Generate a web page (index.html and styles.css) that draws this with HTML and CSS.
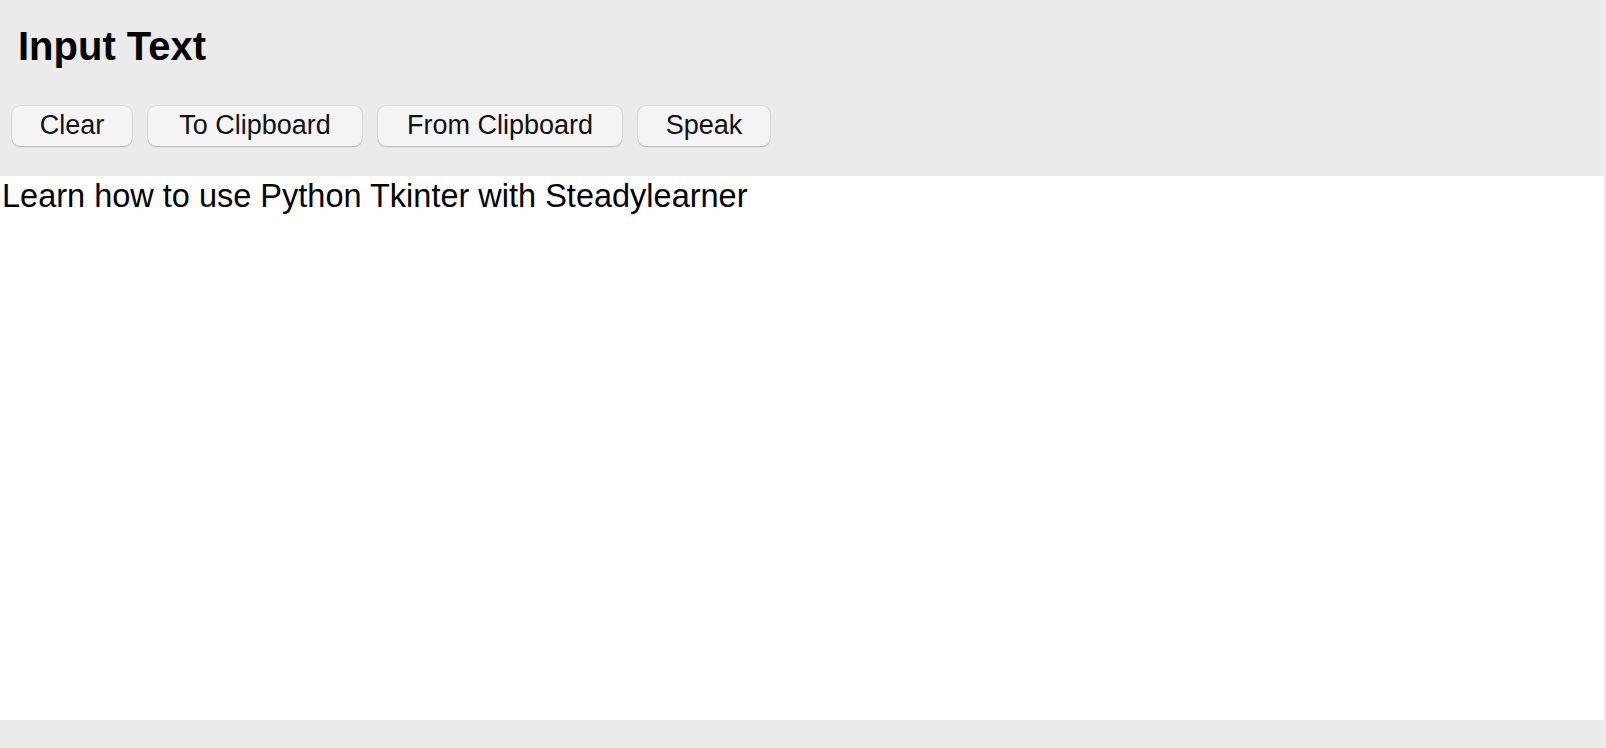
FILE: index.html
```html
<!DOCTYPE html>
<html lang="en">
<head>
<meta charset="utf-8">
<title>Input Text</title>
<link rel="stylesheet" href="styles.css">
</head>
<body>
<div class="app">
  <h1 class="title">Input Text</h1>
  <div class="toolbar">
    <button class="btn btn-clear">Clear</button>
    <button class="btn btn-to">To Clipboard</button>
    <button class="btn btn-from">From Clipboard</button>
    <button class="btn btn-speak">Speak</button>
  </div>
  <div class="editor">Learn how to use Python Tkinter with Steadylearner</div>
</div>
</body>
</html>
```
FILE: styles.css
```css
html, body {
  margin: 0;
  padding: 0;
  background: #ebebeb;
}
body {
  font-family: "Liberation Sans", Arial, sans-serif;
  color: #000;
}
.app {
  display: flex;
  flex-direction: column;
  height: 748px;
}
.title {
  margin: 0;
  padding: 24px 0 0 18px;
  font-size: 40px;
  line-height: 44px;
  font-weight: bold;
}
.toolbar {
  display: flex;
  gap: 16px;
  margin-top: 38px;
  padding-left: 12px;
}
.btn {
  box-sizing: border-box;
  height: 40px;
  padding: 0 0 3px 0;
  margin: 0;
  border: none;
  border-radius: 8px;
  background: #f4f4f4;
  box-shadow: 0 0 0 0.5px rgba(0,0,0,0.10), 0 1px 1.5px rgba(0,0,0,0.18);
  font-family: "Liberation Sans", Arial, sans-serif;
  font-size: 27px;
  line-height: 36px;
  color: #111;
  text-align: center;
}
.btn-clear { width: 120px; }
.btn-to { width: 214px; }
.btn-from { width: 244px; }
.btn-speak { width: 132px; }
.editor {
  margin-top: 30px;
  width: 1604px;
  height: 544px;
  box-sizing: border-box;
  padding: 1px 0 0 2px;
  background: #fff;
  font-size: 32.5px;
  line-height: 38px;
  color: #000;
}
```
